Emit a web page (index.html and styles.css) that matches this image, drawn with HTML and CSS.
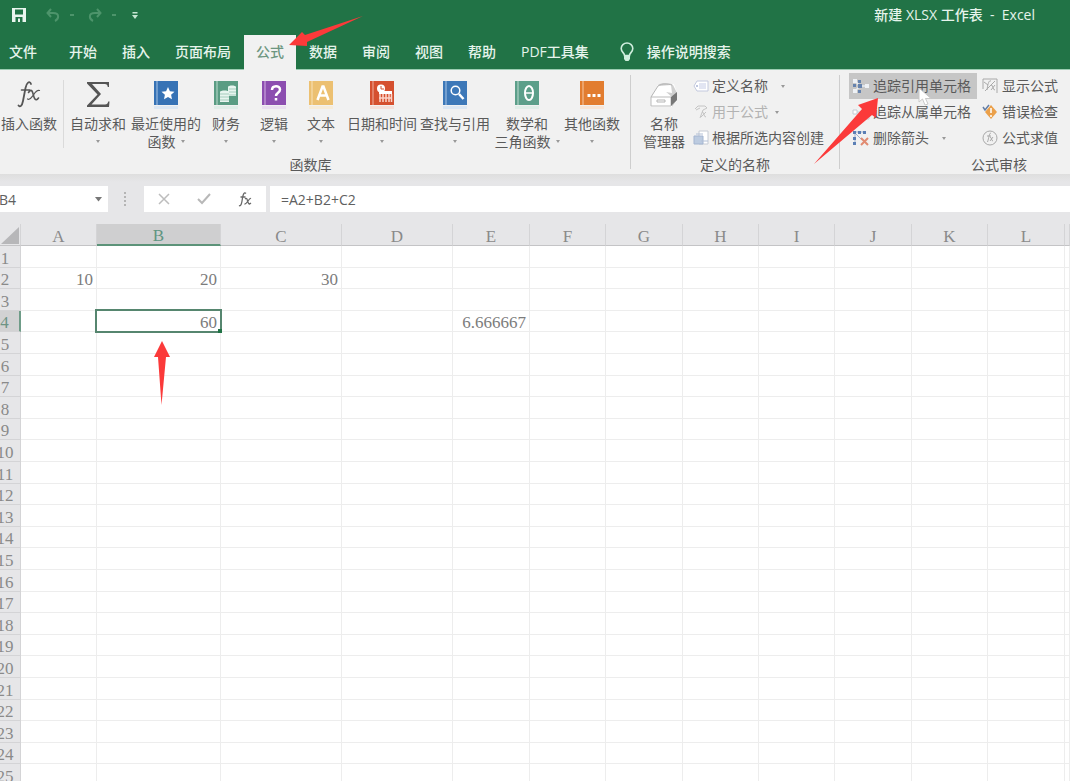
FILE: index.html
```
<!DOCTYPE html>
<html lang="zh-CN">
<head>
<meta charset="utf-8">
<title>新建 XLSX 工作表 - Excel</title>
<link rel="stylesheet" href="styles.css">
</head>
<body>
<header class="top">
  <div class="titlebar">
    <div class="quick">
      <button class="plain" aria-label="保存"><svg width="14" height="14" viewBox="0 0 14 14"><path d="M0 0h14v14H0z" fill="#e9f5ee"/><path d="M3 1.500h8v5H3zM3.500 9h7v5H8V10.500H6V14H3.500z" fill="#217346"/></svg></button>
      <button class="plain undo" aria-label="撤消"><svg width="14" height="14" viewBox="0 0 14 14" fill="none" stroke="#4d946b" stroke-width="2"><path d="M5 1 1.500 5 5 9M2 5h5c7 0 6 6 2 8"/></svg></button>
      <span class="dot dim"></span>
      <button class="plain redo" aria-label="恢复"><svg width="14" height="14" viewBox="0 0 14 14" fill="none" stroke="#4d946b" stroke-width="2"><path d="M9 1l3.500 4L9 9M12 5H7C0 5 1 11 5 13"/></svg></button>
      <span class="dot dim"></span>
      <button class="plain custom" aria-label="自定义快速访问工具栏"><svg width="6" height="7" viewBox="0 0 6 7"><path d="M.5 0h5v1.500h-5zM0 3h6L3 7z" fill="#c5e6d2"/></svg></button>
    </div>
    <div class="doc">新建 XLSX 工作表&nbsp; -&nbsp; Excel</div>
  </div>
  <nav class="tabs">
    <button class="tab file">文件</button>
    <button class="tab">开始</button>
    <button class="tab">插入</button>
    <button class="tab">页面布局</button>
    <button class="tab active">公式</button>
    <button class="tab">数据</button>
    <button class="tab">审阅</button>
    <button class="tab">视图</button>
    <button class="tab">帮助</button>
    <button class="tab">PDF工具集</button>
    <button class="tab tell"><svg width="14" height="20" viewBox="0 0 14 20"><path d="M4.500 13.500C4.500 11 1.200 10 1.200 6.500a5.800 5.500 0 0 1 11.600 0C12.800 10 9.500 11 9.500 13.500z" fill="none" stroke="#cfeedd" stroke-width="1.600"/><path d="M4 13h6v4L8.500 19h-3L4 17z" fill="#cfeedd"/></svg>操作说明搜索</button>
  </nav>
</header>

<main>
<section class="ribbon">
  <div class="group library">
    <div class="tools">
      <button class="big insert"><svg class="ico" width="30" height="30" viewBox="0 0 30 30"><g fill="none" stroke="#555" stroke-linecap="round"><path d="M17 4C15.500 0 12.500 3 11.500 8L9 21c-1 5-3 6.500-4.500 4.500" stroke-width="1.800"/><path d="M7.500 10h8M14.500 12.500c2-3 3.500-3 4.500 1s2 9 5.500 4.500" stroke-width="1.600"/><path d="M25.500 10.500c-3-1-5 3-6.500 5s-3 5-5.500 3.500" stroke-width="1.200"/></g></svg>插入函数</button>
      <span class="sep"></span>
      <button class="big sum"><svg class="ico" width="26" height="30" viewBox="0 0 26 30"><path d="M2 2h22v5h-1.200c-.3-2-1-3-3-3H7l9 10L6.500 24.500H20c2 0 2.800-1 3.200-3h1.300L24 27H2v-1.500L12.500 14.500 2 3.500z" fill="#555"/></svg>自动求和<i class="caret"></i></button>
      <button class="big recent"><svg class="ico" width="26" height="30" viewBox="0 0 26 30"><path d="M1 1h24v24H1z" fill="#3672b5"/><path d="M3.500 1h1v24h-1z" fill="#a9c6e6"/><path d="M1 26h24v3H1z" fill="#dce7f3"/><path d="m15 7 1.900 4.200 4.600.5-3.400 3.100.9 4.500-4-2.300-4 2.300.9-4.500-3.400-3.100 4.600-.5z" fill="#fff"/></svg>最近使用的<span>函数<i class="caret inline"></i></span></button>
      <button class="big finance"><svg class="ico" width="26" height="30" viewBox="0 0 26 30"><path d="M1 1h24v24H1z" fill="#5a9c83"/><path d="M3.500 1h1v24h-1z" fill="#bddccf"/><path d="M1 26h24v3H1z" fill="#e0eee8"/><path d="M15 7c0-2 8-2 8 0v9h-8zM7 12c0-2 9-2 9 0v10H7z" fill="#e7f5ef"/><path d="M7 14h9M7 17h9M7 20h9M16 9h7M16 12h7M16 15h7" stroke="#a5cdbd"/></svg>财务<i class="caret"></i></button>
      <button class="big logic"><svg class="ico" width="26" height="30" viewBox="0 0 26 30"><path d="M1 1h24v24H1z" fill="#8c4eb0"/><path d="M3.500 1h1v24h-1z" fill="#d3b4e4"/><path d="M1 26h24v3H1z" fill="#eadff0"/><path d="M11 10c0-5 8-5 8-.5 0 3.500-4 3-4 6.500M15 18v2.500" fill="none" stroke="#fff" stroke-width="2.500"/></svg>逻辑<i class="caret"></i></button>
      <button class="big text"><svg class="ico" width="26" height="30" viewBox="0 0 26 30"><path d="M1 1h24v24H1z" fill="#ecc071"/><path d="M3.500 1h1v24h-1z" fill="#f8e2ba"/><path d="M1 26h24v3H1z" fill="#f7ecd8"/><path d="m9.500 20 5-13.500h1l5 13.500M11 15.500h8" fill="none" stroke="#fff" stroke-width="2.500"/></svg>文本<i class="caret"></i></button>
      <button class="big date"><svg class="ico" width="26" height="30" viewBox="0 0 26 30"><path d="M1 1h24v24H1z" fill="#d5502f"/><path d="M3.500 1h1v24h-1z" fill="#f0ae9e"/><path d="M1 26h24v3H1z" fill="#f5dfd9"/><path d="M10 11h13v3H10z" fill="#fff"/><path d="M11 14v8M14 14v8M17 14v8M20 14v8M22.500 14v8M10 18h13" stroke="#fbd3c9" stroke-width="1.500"/><circle cx="12" cy="8.500" r="4" fill="#fff"/><path d="M12 6v3h3" fill="none" stroke="#d5502f"/></svg>日期和时间<i class="caret"></i></button>
      <button class="big lookup"><svg class="ico" width="26" height="30" viewBox="0 0 26 30"><path d="M1 1h24v24H1z" fill="#3d78b8"/><path d="M3.500 1h1v24h-1z" fill="#a9c6e6"/><path d="M1 26h24v3H1z" fill="#dce7f3"/><circle cx="13.500" cy="10.500" r="4.300" fill="none" stroke="#fff" stroke-width="1.500"/><path d="m17 14 4.500 5" stroke="#fff" stroke-width="2.500"/></svg>查找与引用<i class="caret"></i></button>
      <button class="big math"><svg class="ico" width="26" height="30" viewBox="0 0 26 30"><path d="M1 1h24v24H1z" fill="#5c9f8a"/><path d="M3.500 1h1v24h-1z" fill="#bddccf"/><path d="M1 26h24v3H1z" fill="#e0eee8"/><ellipse cx="15" cy="13" rx="4" ry="7" fill="none" stroke="#fff" stroke-width="2"/><path d="M11 13h8" stroke="#fff" stroke-width="1.500"/></svg>数学和<span>三角函数<i class="caret inline"></i></span></button>
      <button class="big other"><svg class="ico" width="26" height="30" viewBox="0 0 26 30"><path d="M1 1h24v24H1z" fill="#e27d30"/><path d="M3.500 1h1v24h-1z" fill="#f7c9a4"/><path d="M1 26h24v3H1z" fill="#f8e5d6"/><path d="M8.500 14h3v3h-3zM13.500 14h3v3h-3zM18.500 14h3v3h-3z" fill="#fff"/></svg>其他函数<i class="caret"></i></button>
    </div>
    <div class="caption">函数库</div>
  </div>
  <span class="rule"></span>

  <div class="group names">
    <div class="tools">
      <button class="big manager"><svg class="ico" width="30" height="30" viewBox="0 0 30 30"><path d="M9 5 25 4l3 9v8l-5 6H2v-9z" fill="#fff"/><path d="M9 5c4-3 13-2 15 0l4 8v7l-5 7V17z" fill="#d0d0d0"/><path d="m10 6 12-1 1 8-6-1-11 1z" fill="#fff"/><path d="M2 17h20v9H2z" fill="#fff" stroke="#bbb"/><path d="m22 17 6-5v8l-6 6z" fill="#777"/><path d="m2 17 7-11c4-3 10-2 14-1M8 20h8v2H8z" fill="none" stroke="#b5b5b5"/></svg>名称<span>管理器</span></button>
      <div class="list">
        <button class="row"><svg width="16" height="16" viewBox="0 0 16 16"><path d="M4 3h11v10H4L1 8z" fill="#fff" stroke="#c3c9de"/><path d="M6 6h7M6 8h7M6 10h7" stroke="#c5cce6"/><circle cx="4" cy="8" r="1" fill="#aab4d5"/></svg>定义名称<i class="caret far"></i></button>
        <button class="row off" disabled><svg width="16" height="16" viewBox="0 0 16 16" fill="none" stroke="#c4c4c4"><path d="M2 5 5 2h7l2 2-4 2-3 8M3 6l4-2M9 8c3 0 1 5 4 5M13 8l-5 5"/></svg>用于公式<i class="caret"></i></button>
        <button class="row"><svg width="16" height="16" viewBox="0 0 16 16"><path d="M6 1h9v13H6z" fill="#fff" stroke="#c6cbd4"/><path d="M1 6h9v8H1z" fill="#bccbe0" stroke="#a4b5d0"/><path d="M3 4h7M8 11h7" stroke="#b3c0d6"/></svg>根据所选内容创建</button>
      </div>
    </div>
    <div class="caption">定义的名称</div>
  </div>
  <span class="rule"></span>

  <div class="group audit">
    <div class="tools">
      <div class="list">
        <button class="row hot"><svg width="18" height="16" viewBox="0 0 18 16"><path d="M3 3l5 5-5 5M8 8h7" fill="none" stroke="#e8edf4" stroke-width="1.500"/><path d="M1 1h4v4H1zM1 11h4v4H1zM13 6h4v4h-4z" fill="#eef1f5"/><path d="M6 2h3v3H6zM1 6h3v3H1zM6 6h4v4H6zM6 12h3v3H6z" fill="#6683ae"/></svg>追踪引用单元格</button>
        <button class="row"><svg width="18" height="16" viewBox="0 0 18 16"><path d="M3 8h6l5-5M9 8l5 5" fill="none" stroke="#c4cad4"/><path d="M1 6h4v4H1zM13 1h4v4h-4zM13 11h4v4h-4z" fill="#fff" stroke="#c4cad4"/></svg>追踪从属单元格</button>
        <button class="row"><svg width="18" height="16" viewBox="0 0 18 16"><path d="M3 2h9M3 3v9M4 4l6 6" stroke="#9fb3d0"/><path d="M1 1h3v3H1zM6 1h3v3H6zM11 1h3v3h-3zM1 7h3v3H1zM1 12h3v3H1z" fill="#5b7fb5"/><path d="m9 8 7 7M16 8l-7 7" stroke="#e18b72" stroke-width="2"/></svg>删除箭头<i class="caret far"></i></button>
      </div>
      <div class="list">
        <button class="row"><svg width="16" height="16" viewBox="0 0 16 16" fill="none" stroke="#a9a9a9"><path d="M1 1h14v14M1 1v10M3 13 13 3M2 4l4 3M9 3c-2-1-3 2-4 9M9 7c3 0 1 5 4 5M13 7l-4 5"/></svg>显示公式</button>
        <button class="row"><svg width="16" height="16" viewBox="0 0 16 16"><path d="m9 1 6 7-6 7-6-7z" fill="#eba04a"/><path d="M9 4v5M9 11v2" stroke="#fff" stroke-width="1.500"/><path d="m1 3 2 3 4-5" fill="none" stroke="#637da5" stroke-width="1.500"/></svg>错误检查</button>
        <button class="row"><svg width="16" height="16" viewBox="0 0 16 16" fill="none" stroke="#a9a9a9"><circle cx="8" cy="8" r="7"/><path d="M9 3C7 3 7 8 5.500 12M5 6h4M8 7c2 0 1 4 3 4M11 7l-3 4"/></svg>公式求值</button>
      </div>
    </div>
    <div class="caption">公式审核</div>
  </div>
</section>

<section class="formula">
  <div class="namebox"><input class="field" aria-label="名称框" value="B4"><button class="plain" aria-label="名称列表"><svg width="7" height="5" viewBox="0 0 7 5"><path d="M0 0h7L3.500 4.500z" fill="#777"/></svg></button></div>
  <svg class="grip" width="3" height="14" viewBox="0 0 3 14"><path d="M0 0h2v2H0zM0 4h2v2H0zM0 8h2v2H0zM0 12h2v2H0z" fill="#b4b4b4"/></svg>
  <div class="actions">
    <button class="plain" aria-label="取消"><svg width="12" height="12" viewBox="0 0 12 12"><path d="m1 1 10 10M11 1 1 11" stroke="#bdbdbd" stroke-width="1.500"/></svg></button>
    <button class="plain" aria-label="输入"><svg width="14" height="12" viewBox="0 0 14 12"><path d="m1 6 4 4 8-9" fill="none" stroke="#b8b8b8" stroke-width="2"/></svg></button>
    <button class="plain" aria-label="插入函数"><svg width="14" height="15" viewBox="0 0 14 15" fill="none" stroke="#686868" stroke-width="1.300"><path d="M8 1.500C6-.5 5 3 4.500 6S3.500 15 1 13.500M2.500 5h5M7 7c3-3 2 5 4.500 5L13 11M13 6.500c-2-1-4 6-6.500 5.500"/></svg></button>
  </div>
  <input class="field entry" aria-label="编辑栏" value="=A2+B2+C2">
</section>

<section class="sheet">
  <table class="grid">
    <colgroup><col class="c-head"><col class="c-a"><col class="c-b"><col class="c-c"><col class="c-d"><col class="c-wide"><col class="c-std"><col class="c-wide"><col class="c-std"><col class="c-std"><col class="c-wide"><col class="c-std"><col class="c-wide"><col></colgroup>
    <thead><tr><th class="corner"><svg width="18" height="17" viewBox="0 0 18 17"><path d="M18 0v17H0z" fill="#b7b7b9"/></svg></th><th>A</th><th class="on">B</th><th>C</th><th>D</th><th>E</th><th>F</th><th>G</th><th>H</th><th>I</th><th>J</th><th>K</th><th>L</th><th></th></tr></thead>
    <tbody id="rows"></tbody>
  </table>
</section>
</main>

<svg class="mark mark-tab" width="74" height="32" viewBox="0 0 74 32"><path d="M0 29 13 16l3 3L74 0 18 26v4z" fill="#fb3a3a"/></svg>
<svg class="mark mark-cell" width="16" height="64" viewBox="0 0 16 64"><path d="M8 0l8 16h-4L7.500 64 4 16H0z" fill="#fb3a3a"/></svg>
<svg class="mark mark-trace" width="66" height="67" viewBox="0 0 66 67"><path d="M64 0 44 7l4 4L0 66l58-49 4 3z" fill="#fb3a3a"/></svg>
<svg class="mark pointer" width="14" height="20" viewBox="0 0 14 20"><path d="M1 1v14l3.500-3L7 18l3-1-2.500-5.500H13z" fill="#fff" stroke="#c9c9c9"/></svg>
<script src="script.js"></script>
</body>
</html>
```

FILE: styles.css
```
* { box-sizing: border-box; }
body {
  margin: 0;
  height: 100vh;
  overflow: hidden;
  position: relative;
  background: #fff;
  color: #5a5a5a;
  font: 14px/18px "Open Sans", "Noto Sans CJK SC", sans-serif;
}
button { font: inherit; color: inherit; border: 0; background: none; padding: 0; white-space: nowrap; }
svg { display: block; flex: none; }
.plain { display: flex; align-items: center; justify-content: center; }

.top { background: #217346; color: #e6f4ec; border-bottom: 1px solid #9bcdb2; font-weight: 500; }
.titlebar { display: flex; justify-content: space-between; height: 35px; padding: 0 35px 5px 12px; align-items: center; }
.quick { display: flex; align-items: center; }
.undo { margin-left: 20px; }
.redo { margin-left: 14px; }
.custom { margin-left: 16px; }
.dot { width: 4px; height: 2px; margin-left: 10px; background: #4d946b; }
.tabs { display: flex; gap: 1px; height: 34px; }
.tab { padding: 0 12px; }
.file { padding: 0 19px 0 9px; }
.active { background: #f1f1f1; color: #6d9680; margin-bottom: -1px; padding-bottom: 1px; }
.tell { display: flex; align-items: center; gap: 13px; margin-left: 6px; }

.ribbon { display: flex; background: #f1f1f1; overflow: hidden; }
.group { flex: none; }
.rule { flex: none; width: 1px; margin: 5px 0; background: #cecece; }
.tools { display: flex; height: 86px; }
.caption { text-align: center; height: 18px; }
.library { padding-right: 9px; }
.big { display: flex; flex-direction: column; align-items: center; padding-top: 10px; flex: none; }
.ico { margin-bottom: 5px; }
.insert { width: 58px; }
.sep { width: 1px; margin: 10px 1px 8px 5px; background: #dadada; }
.sum { width: 66px; }
.recent { width: 70px; }
.finance { width: 50px; }
.logic { width: 46px; }
.text { width: 48px; }
.date { width: 74px; }
.lookup, .math { width: 72px; }
.other { width: 58px; }
.caret { display: block; width: 0; border: 2px solid transparent; border-top: 3px solid #999; border-bottom: 0; margin-top: 7px; }
.inline { display: inline-block; margin: 0 0 4px 5px; }
.row .caret { margin: 0 0 0 4px; }
.row .far { margin-left: 10px; }

.names { width: 208px; }
.manager { width: 66px; }
.list { display: flex; flex-direction: column; padding-top: 3px; }
.row { display: flex; align-items: center; height: 26px; gap: 4px; }
.names .row { margin-left: -4px; gap: 3px; }
.off { color: #b3b3b3; }
.audit { width: 318px; }
.audit .tools { padding-left: 9px; gap: 5px; }
.audit .row { padding: 0 6px 0 3px; gap: 3px; }
.audit .list + .list .row { padding-left: 0; gap: 4px; }
.hot { background: #c6c6c6; }

.formula { display: flex; align-items: center; height: 50px; background: linear-gradient(#dedede, #e6e6e8 8px); }
.field { border: 0; padding: 0; margin: 0; min-width: 0; height: 26px; background: #fff; color: #606060; font: inherit; }
.namebox { display: flex; width: 108px; padding-right: 6px; background: #fff; }
.namebox .field { flex: 1; margin-left: -1px; }
.grip { margin: 0 17px 0 16px; }
.actions { display: flex; justify-content: space-between; width: 122px; height: 26px; padding: 0 14px; background: #fff; }
.entry { flex: 1; margin-left: 4px; padding-left: 11px; }

.sheet { overflow: hidden; }
.grid { table-layout: fixed; width: calc(100% + 10px); margin-left: -10px; border-collapse: separate; border-spacing: 0; font: 17px/17px "Liberation Serif", serif; color: #7c7c7c; }
.grid th { font-weight: 400; padding: 3px 0 0; background: #e6e6e8; color: #8a8a8a; border-right: 1px solid #d4d4d6; border-bottom: 1px solid #d4d4d6; }
.grid thead th { height: 22px; border-bottom-color: #c4c4c6; }
.grid .corner { padding: 0; }
.grid .corner svg { margin: 2px 1px 0 auto; }
.grid thead .on { background: #cfcfd0; color: #5f9582; border-bottom: 2px solid #5c9379; padding-top: 3px; }
.grid tbody .on { background: #d2d2d3; color: #6d9485; border-right: 2px solid #6f9c88; }
.grid td { padding: 3px 3px 0 0; text-align: right; border-right: 1px solid #ededed; border-bottom: 1px solid #ededed; }
.grid tbody tr { height: 22px; }
.grid tbody tr:nth-child(5n+2), .grid tbody tr:nth-child(5n+4) { height: 21px; }
.c-head { width: 31px; }
.c-a, .c-std { width: 76px; }
.c-b { width: 124px; }
.c-c { width: 121px; }
.c-d { width: 111px; }
.c-wide { width: 77px; }
.grid .picked { position: relative; }
.picked::before { content: ""; position: absolute; inset: -2px; border: 2px solid #56866f; }
.picked::after { content: ""; position: absolute; right: -2px; bottom: -2px; width: 4px; height: 4px; background: #217346; }

.mark { position: absolute; pointer-events: none; }
.mark-tab { left: 289px; top: 16px; }
.mark-cell { left: 154px; top: 341px; }
.mark-trace { left: 814px; top: 98px; }
.pointer { left: 918px; top: 87px; }
```

FILE: script.js
```
const values = { A2: "10", B2: "20", C2: "30", B4: "60", E4: "6.666667" };
const columns = "ABCDEFGHIJKLM".split("");
const body = document.getElementById("rows");

for (let r = 1; r <= 25; r++) {
  const row = body.insertRow();
  const head = document.createElement("th");
  head.textContent = r;
  if (r === 4) head.className = "on";
  row.append(head);
  for (const c of columns) {
    const cell = row.insertCell();
    cell.textContent = values[c + r] || "";
    if (c + r === "B4") cell.className = "picked";
  }
}
```
